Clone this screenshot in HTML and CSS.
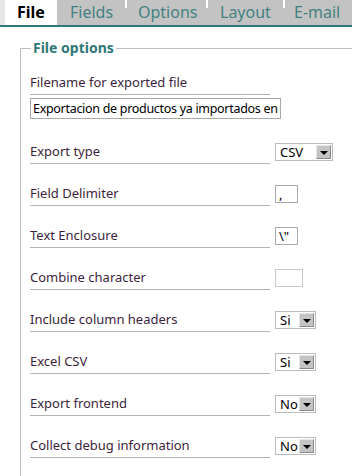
FILE: index.html
```html
<!DOCTYPE html>
<html lang="en">
<head>
    <meta charset="UTF-8">
    <title>Export options</title>
    <link rel="stylesheet" href="styles.css">
</head>
<body>
    <ul class="tabs">
        <li class="tab active">File</li>
        <li class="tab fields">Fields</li>
        <li class="tab opts">Options</li>
        <li class="tab layout">Layout</li>
        <li class="tab email">E-mail</li>
    </ul>

    <fieldset class="options">
        <legend>File options</legend>

        <div class="row wide">
            <span class="label">Filename for exported file</span>
        </div>
        <input class="text long" type="text" value="Exportacion de productos ya importados en">

        <div class="row first">
            <span class="label">Export type</span>
            <span class="select w58"><span class="val">CSV</span><span class="btn"></span></span>
        </div>
        <div class="row">
            <span class="label">Field Delimiter</span>
            <input class="text small" type="text" value=",">
        </div>
        <div class="row">
            <span class="label">Text Enclosure</span>
            <input class="text small" type="text" value="\&quot;">
        </div>
        <div class="row">
            <span class="label">Combine character</span>
            <input class="text mid" type="text" value="">
        </div>
        <div class="row">
            <span class="label">Include column headers</span>
            <span class="select"><span class="val">Si</span><span class="btn"></span></span>
        </div>
        <div class="row">
            <span class="label">Excel CSV</span>
            <span class="select"><span class="val">Si</span><span class="btn"></span></span>
        </div>
        <div class="row">
            <span class="label">Export frontend</span>
            <span class="select"><span class="val">No</span><span class="btn"></span></span>
        </div>
        <div class="row">
            <span class="label">Collect debug information</span>
            <span class="select"><span class="val">No</span><span class="btn"></span></span>
        </div>
    </fieldset>
</body>
</html>
```

FILE: styles.css
```css
body { margin: 0; font-family: "Noto Sans", "DejaVu Sans", sans-serif; background: #fff; overflow: hidden; }
.tabs { list-style: none; margin: 0; padding: 0 0 0 5px; display: flex; height: 25px; background: #c3c3c3; border-bottom: 2px solid #2f7878; box-shadow: inset 5px 0 0 #e6e6e6; overflow: hidden; }
.tab { position: relative; flex: none; box-sizing: border-box; padding: 2px 0 0 13px; font-size: 16px; line-height: 20px; color: #448282; height: 25px; white-space: nowrap; }
.tab::before { content: ""; position: absolute; left: 0; top: 0; width: 2px; height: 8px; background: #fff; }
.tab.active { width: 52px; padding-left: 12px; background: #fff; color: #000; font-weight: bold; height: 27px; margin-bottom: -2px; }
.tab.fields { width: 68px; }
.tab.opts { width: 81px; }
.tab.layout { width: 77px; padding-left: 14px; }
.tab.email { flex: 1; padding-left: 11px; }
.tab.active::before, .tab.active + .tab::before { display: none; }
.options { margin: 13px 0 0 20px; min-width: 0; padding: 0 0 9px 9px; border: 1px solid #bdbdbd; border-right: none; }
.options legend { margin-left: 1px; padding: 0 2px; color: #2f7878; font-weight: bold; font-size: 14px; line-height: 16px; }
.row { display: flex; align-items: center; height: 42px; }
.row.wide { height: 39px; align-items: flex-end; }
.row.first { margin-top: 12px; }
.label { width: 240px; height: 22px; line-height: 20px; border-bottom: 1px solid #b3b3b3; color: #3d1f3d; font-size: 13px; margin-right: 5px; }
.text { font-family: inherit; font-size: 13px; color: #000; border: 1px solid #a9a9a9; height: 18px; padding: 0 3px; box-sizing: border-box; margin: 0; }
.text.long { width: 251px; height: 21px; margin-top: 3px; padding: 0 2px; font-size: 12.5px; letter-spacing: -0.3px; }
.text.small { width: 23px; }
.text.mid { width: 28px; border-color: #c8c8c8; }
.select { display: flex; align-items: center; border: 1px solid #bcbcbc; height: 18px; box-sizing: border-box; width: 41px; font-size: 13px; padding: 0 1px 0 4px; }
.select.w58 { width: 58px; }
.select .val { flex: 1; }
.select .btn { width: 15px; height: 14px; box-sizing: border-box; background: #c4c4c4; border: 1px solid #e6e6e6; border-right-color: #8a8a8a; border-bottom-color: #8a8a8a; display: flex; align-items: center; justify-content: center; }
.select .btn::after { content: ""; border-left: 4px solid transparent; border-right: 4px solid transparent; border-top: 4px solid #000; margin-top: 1px; }
```
